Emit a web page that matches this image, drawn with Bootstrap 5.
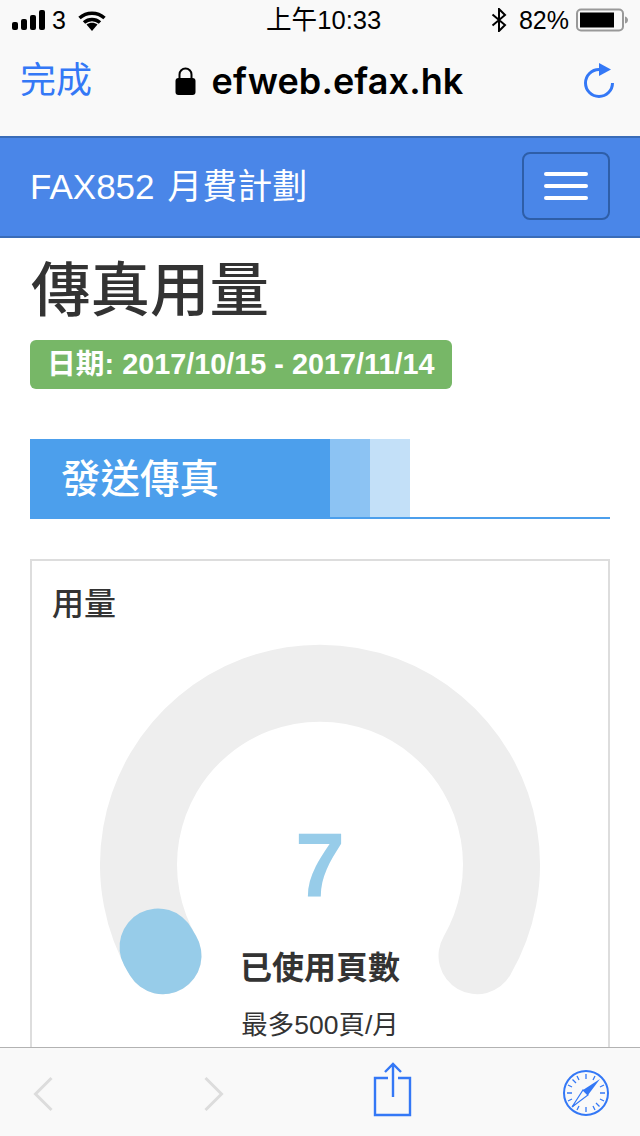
<!DOCTYPE html>
<html lang="zh-Hant">
<head>
    <meta charset="UTF-8">
    <meta name="viewport" content="width=device-width, initial-scale=1.0">
    <title>傳真用量</title>
    <link href="https://cdn.jsdelivr.net/npm/bootstrap@5.3.0/dist/css/bootstrap.min.css" rel="stylesheet">
    <style>
        html, body { height: 1136px; overflow: hidden; }
        body {
            background-color: #fff;
            color: #333;
            font-family: "Liberation Sans", "Noto Sans CJK TC", sans-serif;
        }
        .phone-shell { width: 640px; height: 1136px; }

        .safari-top { height: 136px; background-color: #f9f9f9; color: #000; flex: none; }
        .status-row { height: 40px; padding: 0 11px 0 12px; font-size: 25px; line-height: 40px; }
        .status-left { width: 254px; }
        .status-time { font-size: 25.600px; }
        .status-carrier { margin-left: 7px; margin-right: 12px; }
        .status-pct { margin: 0 7px 0 12px; }
        .address-row { height: 82px; padding: 0 24px 0 20px; }
        .done-link { width: 120px; color: #3478f6; font-size: 36px; line-height: 1; text-decoration: none; }
        .address-group { margin-left: 2px; }
        .address-text { font-family: "Inter", sans-serif; font-weight: 600; font-size: 36px; margin-left: 16px; letter-spacing: .1px; }
        .reload-box { width: 120px; }

        .fax-navbar {
            flex: none;
            height: 102px;
            padding: 0 30px;
            background-color: #4a86e8;
            border-top: 2px solid #3a6cb8;
            border-bottom: 2px solid #3a6cb8;
        }
        .fax-brand { color: #fff; font-size: 35px; font-weight: 400; padding: 0; margin: 0; word-spacing: 3px; }
        .fax-toggler {
            width: 88px;
            height: 68px;
            padding: 0;
            margin-top: -2px;
            border: 2px solid #2e5ea8;
            border-radius: 8px;
            gap: 8px;
        }
        .fax-toggler i { display: block; width: 44px; height: 4px; background-color: #fff; border-radius: 2px; }

        .page-body { flex: 1 1 auto; min-height: 0; overflow: hidden; padding: 0 30px; }
        .page-title { font-size: 59.500px; font-weight: 500; line-height: 66px; margin: 20px 0 16px 1px; color: #333; }
        .date-tag {
            display: inline-block;
            height: 49px;
            padding: 0 18px 0 17px;
            background-color: #77b767;
            border-radius: 6px;
            color: #fff;
            font-size: 28.800px;
            font-weight: 700;
            line-height: 49px;
        }
        .tab-strip { height: 80px; margin-top: 50px; border-bottom: 2px solid #4c9fec; }
        .tab-main {
            width: 300px;
            height: 80px;
            padding-left: 31px;
            background-color: #4c9fec;
            color: #fff;
            font-size: 39.500px;
            font-weight: 500;
            line-height: 80px;
        }
        .tab-fade { width: 40px; height: 78px; }
        .fade-one { background-color: #8cc3f3; }
        .fade-two { background-color: #c3e0f8; }

        .usage-panel {
            height: 560px;
            margin-top: 40px;
            border: 2px solid #ddd;
            border-radius: 0;
        }
        .usage-title { font-size: 32px; font-weight: 500; line-height: 40px; margin: 23px 0 0 20px; color: #333; }
        .gauge-box { position: absolute; left: 0; top: 0; width: 576px; height: 480px; }
        .gauge-num { position: absolute; left: 0; right: 0; top: 258px; text-align: center; color: #97cce9; font-size: 90px; font-weight: 700; line-height: 92px; }
        .gauge-label { position: absolute; left: 0; right: 0; top: 385px; text-align: center; font-size: 32px; font-weight: 700; line-height: 44px; }
        .gauge-sub { position: absolute; left: 0; right: 0; top: 446px; text-align: center; font-size: 26.500px; line-height: 36px; }

        .safari-bottom {
            flex: none;
            height: 89px;
            background-color: #f9f9f9;
            border-top: 1px solid #b2b2b2;
            position: relative;
        }
        .safari-bottom svg { position: absolute; }
        .tool-back { left: 32px; top: 28px; }
        .tool-forward { left: 202px; top: 28px; }
        .tool-share { left: 372px; top: 14px; }
        .tool-compass { left: 560px; top: 20px; }
    </style>
</head>
<body>
    <div class="phone-shell d-flex flex-column">
        <div class="safari-top">
            <div class="status-row d-flex align-items-center">
                <div class="status-left d-flex align-items-center">
                    <svg width="33" height="20" viewBox="0 0 33 20"><rect x="0" y="12" width="6" height="8" rx="2" fill="#000"/><rect x="9" y="9" width="6" height="11" rx="2" fill="#000"/><rect x="18" y="5" width="6" height="15" rx="2" fill="#000"/><rect x="27" y="0" width="6" height="20" rx="2" fill="#000"/></svg>
                    <span class="status-carrier">3</span>
                    <svg width="28" height="21" viewBox="0 0 28 21"><path d="M14 21l-5.500-6.500c3.200-2.500 7.800-2.500 11 0z" fill="#000"/><path d="M1.500 8c7.200-6.300 17.800-6.300 25 0M6 12.500c4.700-4 11.300-4 16 0" fill="none" stroke="#000" stroke-width="3.600"/></svg>
                </div>
                <div class="status-time">上午10:33</div>
                <div class="ms-auto d-flex align-items-center">
                    <svg width="16" height="24" viewBox="0 0 16 24"><path d="M1.500 6.500L14 17l-6 6V1l6 6L1.500 17.500" fill="none" stroke="#000" stroke-width="2"/></svg>
                    <span class="status-pct">82%</span>
                    <svg width="53" height="24" viewBox="0 0 53 24"><rect x="1" y="1.500" width="46" height="21" rx="4" fill="none" stroke="#999" stroke-width="2"/><rect x="4" y="4.500" width="34" height="15" fill="#000"/><path d="M49 8.500c2 .5 3 2 3 3.500s-1 3-3 3.500z" fill="#999"/></svg>
                </div>
            </div>
            <div class="address-row d-flex align-items-center justify-content-between">
                <a class="done-link" href="#">完成</a>
                <div class="address-group d-flex align-items-center">
                    <svg width="21" height="28" viewBox="0 0 21 28"><path d="M4.500 12V7.500a6 6 0 0 1 12 0V12" fill="none" stroke="#000" stroke-width="2"/><rect x="0.500" y="11" width="20" height="17" rx="3" fill="#000"/></svg>
                    <span class="address-text">efweb.efax.hk</span>
                </div>
                <div class="reload-box d-flex justify-content-end">
                    <svg width="32" height="36" viewBox="0 0 32 36"><path d="M15 6.500A13.500 13.500 0 1 0 28.500 20" fill="none" stroke="#3478f6" stroke-width="3"/><path d="M15 0l12 6.500L15 13z" fill="#3478f6"/></svg>
                </div>
            </div>
        </div>

        <nav class="navbar fax-navbar d-flex align-items-center justify-content-between">
            <a class="navbar-brand fax-brand" href="#">FAX852 月費計劃</a>
            <button class="navbar-toggler fax-toggler d-flex flex-column align-items-center justify-content-center" type="button" aria-label="Toggle navigation"><i></i><i></i><i></i></button>
        </nav>

        <main class="page-body">
            <h1 class="page-title">傳真用量</h1>
            <span class="date-tag">日期: 2017/10/15 - 2017/11/14</span>

            <div class="tab-strip d-flex">
                <div class="tab-main">發送傳真</div>
                <div class="tab-fade fade-one"></div>
                <div class="tab-fade fade-two"></div>
            </div>

            <div class="card usage-panel position-relative">
                <div class="usage-title">用量</div>
                <div class="gauge-box">
                    <svg width="576" height="480" viewBox="0 0 576 480">
                        <!-- centre 288,304 in panel coords, arc runs 240 degrees -->
                        <path d="M131 394.700A181.500 181.500 0 1 1 445 394.700" fill="none" stroke="#eee" stroke-width="77" stroke-linecap="round"/>
                        <path d="M131 394.700A181.500 181.500 0 0 1 126 386" fill="none" stroke="#97cce9" stroke-width="77" stroke-linecap="round"/>
                    </svg>
                    <div class="gauge-num">7</div>
                    <div class="gauge-label">已使用頁數</div>
                    <div class="gauge-sub">最多500頁/月</div>
                </div>
            </div>
        </main>

        <div class="safari-bottom">
            <svg class="tool-back" width="22" height="37" viewBox="0 0 22 37"><path d="M19.500 2L3.500 18 19.500 34" fill="none" stroke="#dcdcdc" stroke-width="3"/></svg>
            <svg class="tool-forward" width="22" height="37" viewBox="0 0 22 37"><path d="M3.500 2l16 16-16 16" fill="none" stroke="#dcdcdc" stroke-width="3"/></svg>
            <svg class="tool-share" width="42" height="55" viewBox="0 0 42 55"><path d="M16 16H3v37h35V16H26M21 35V2M13 10l8-8 8 8" fill="none" stroke="#3478f6" stroke-width="2.400"/></svg>
            <svg class="tool-compass" width="52" height="50" viewBox="0 0 52 50">
                <ellipse cx="26" cy="25" rx="22" ry="22" fill="none" stroke="#3478f6" stroke-width="2"/>
                <g stroke="#3478f6" stroke-width="1.300">
                    <path d="M26 6v5M26 39v5M7 25h5M40 25h5M12.500 11.500l3.500 3.500M36 35l3.500 3.500M12.500 38.500l3.500-3.500M17 8l2 4M33 38l2 4M35 8l-2 4M19 38l-2 4M8 17l4 2M40 31l4 2M8 33l4-2M40 19l4-2"/>
                </g>
                <path d="M40 11L23 22l5 5z" fill="#3478f6"/>
                <path d="M12 39l11-17 5 5z" fill="#f9f9f9" stroke="#3478f6" stroke-width="1.200"/>
            </svg>
        </div>
    </div>
    <script src="https://cdn.jsdelivr.net/npm/bootstrap@5.3.0/dist/js/bootstrap.bundle.min.js"></script>
</body>
</html>
